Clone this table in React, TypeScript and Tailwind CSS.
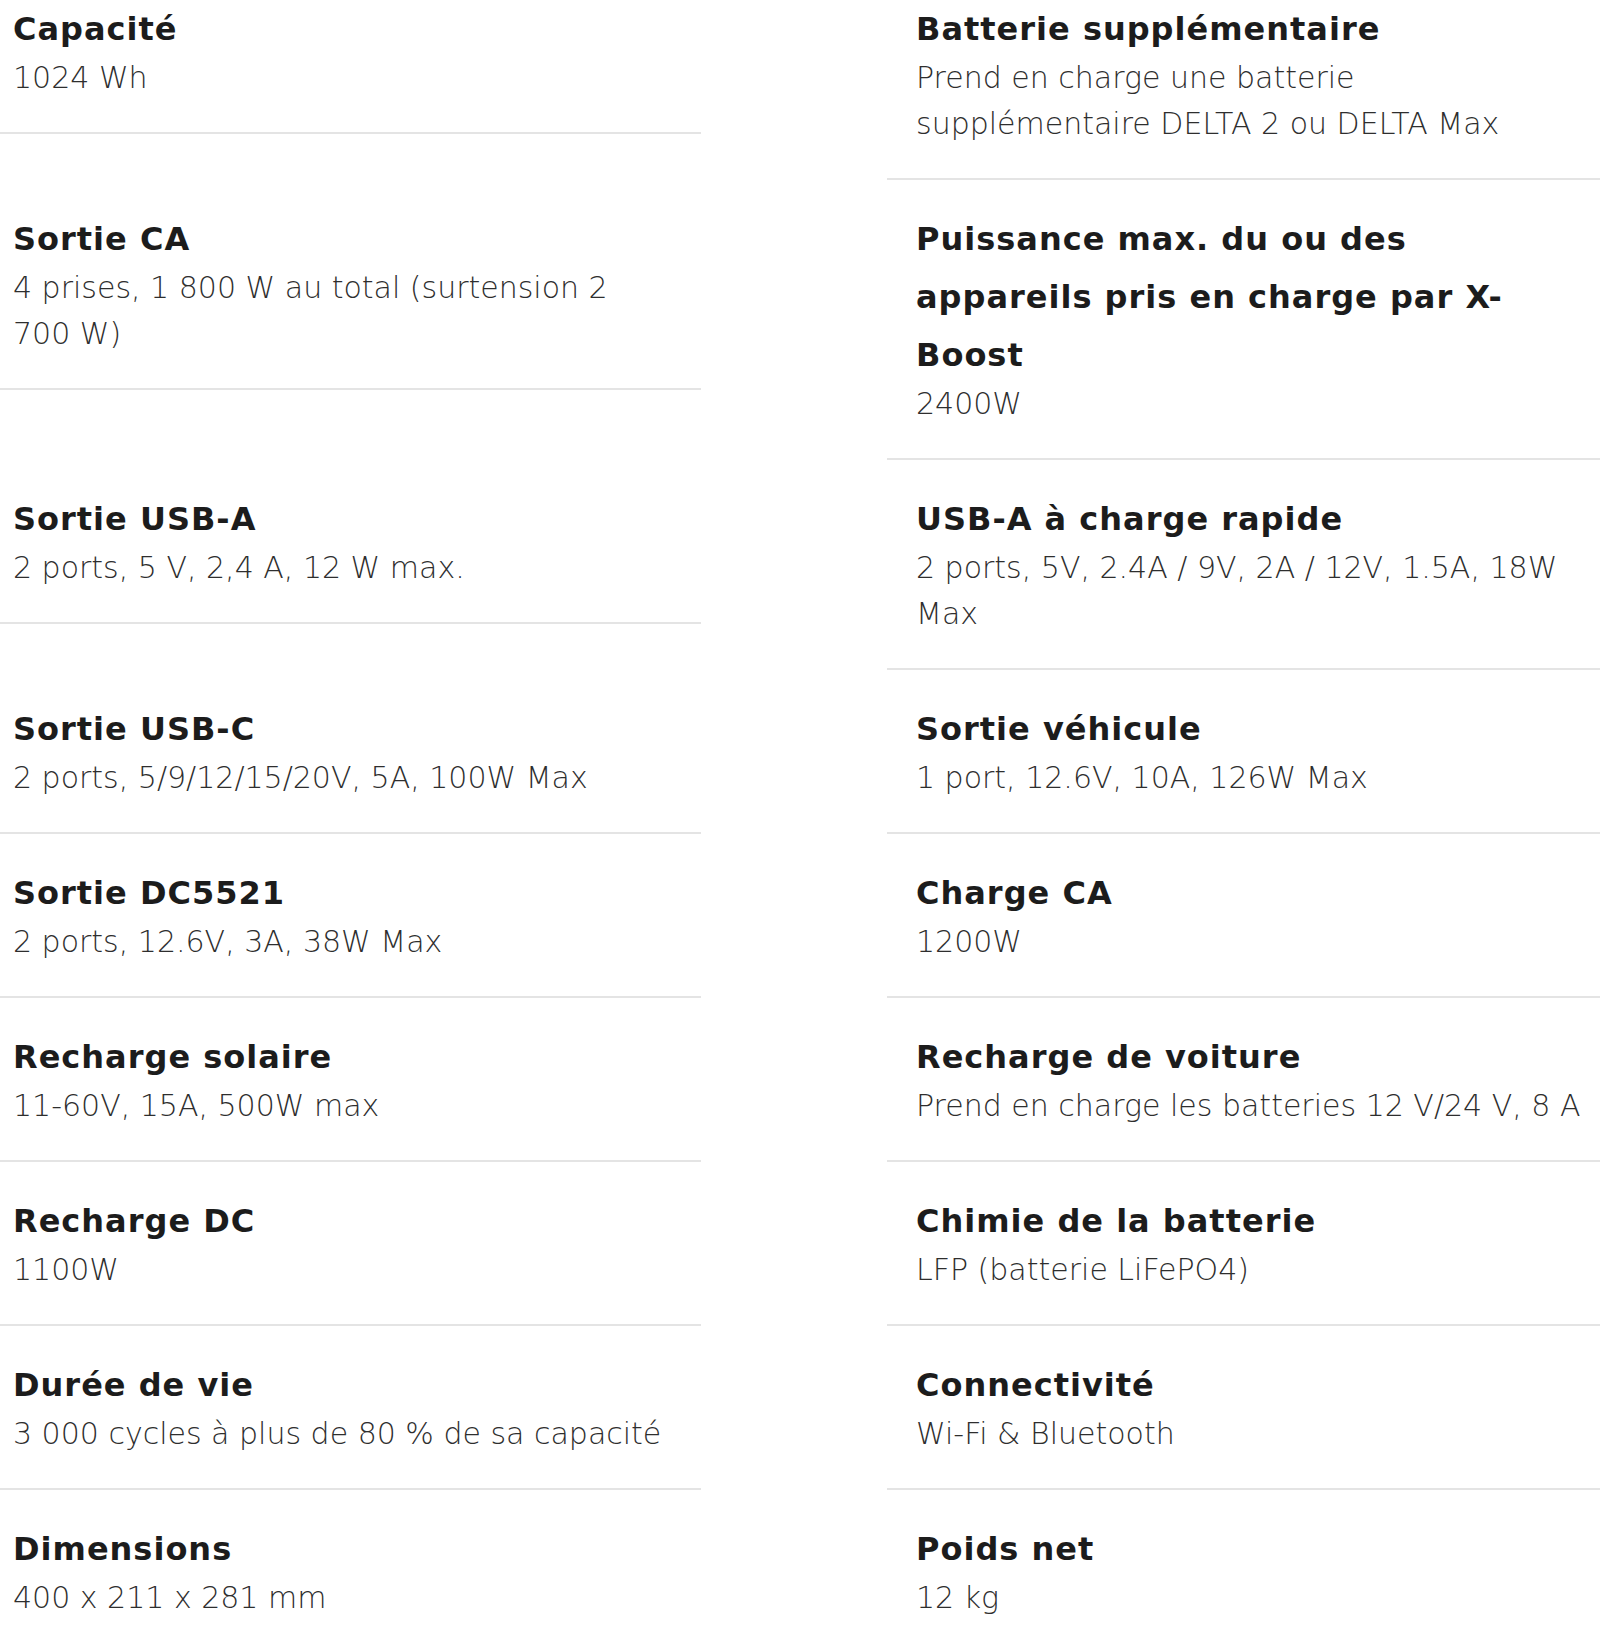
import React from "react";

type Spec = { title: string[]; value: string[] };

const rows: [Spec, Spec][] = [
  [
    { title: ["Capacité"], value: ["1024 Wh"] },
    {
      title: ["Batterie supplémentaire"],
      value: ["Prend en charge une batterie", "supplémentaire DELTA 2 ou DELTA Max"],
    },
  ],
  [
    { title: ["Sortie CA"], value: ["4 prises, 1 800 W au total (surtension 2", "700 W)"] },
    {
      title: ["Puissance max. du ou des", "appareils pris en charge par X-", "Boost"],
      value: ["2400W"],
    },
  ],
  [
    { title: ["Sortie USB-A"], value: ["2 ports, 5 V, 2,4 A, 12 W max."] },
    {
      title: ["USB-A à charge rapide"],
      value: ["2 ports, 5V, 2.4A / 9V, 2A / 12V, 1.5A, 18W", "Max"],
    },
  ],
  [
    { title: ["Sortie USB-C"], value: ["2 ports, 5/9/12/15/20V, 5A, 100W Max"] },
    { title: ["Sortie véhicule"], value: ["1 port, 12.6V, 10A, 126W Max"] },
  ],
  [
    { title: ["Sortie DC5521"], value: ["2 ports, 12.6V, 3A, 38W Max"] },
    { title: ["Charge CA"], value: ["1200W"] },
  ],
  [
    { title: ["Recharge solaire"], value: ["11-60V, 15A, 500W max"] },
    { title: ["Recharge de voiture"], value: ["Prend en charge les batteries 12 V/24 V, 8 A"] },
  ],
  [
    { title: ["Recharge DC"], value: ["1100W"] },
    { title: ["Chimie de la batterie"], value: ["LFP (batterie LiFePO4)"] },
  ],
  [
    { title: ["Durée de vie"], value: ["3 000 cycles à plus de 80 % de sa capacité"] },
    { title: ["Connectivité"], value: ["Wi-Fi & Bluetooth"] },
  ],
  [
    { title: ["Dimensions"], value: ["400 x 211 x 281 mm"] },
    { title: ["Poids net"], value: ["12 kg"] },
  ],
];

function Item({ spec, right }: { spec: Spec; right?: boolean }) {
  return (
    <div
      className={
        "border-b-2 border-[#e4e4e4] pb-[31px] " + (right ? "pl-[29px]" : "pl-[13px]")
      }
    >
      <h3 className="font-['DejaVu_Sans',sans-serif] text-[32px] leading-[58px] font-bold tracking-[1px] text-[#1c1c1c]">
        {spec.title.map((t, i) => (
          <span key={i} className="block whitespace-nowrap">
            {t}
          </span>
        ))}
      </h3>
      <p className="-mt-[3px] font-['DejaVu_Sans',sans-serif] text-[30px] leading-[46px] font-extralight text-[#2e2e2e]">
        {spec.value.map((t, i) => (
          <span key={i} className="block whitespace-nowrap">
            {t}
          </span>
        ))}
      </p>
    </div>
  );
}

export default function App() {
  return (
    <div className="min-h-screen w-[1600px] bg-white">
      <div className="grid grid-cols-[701px_713px] gap-x-[186px] gap-y-[30px] items-start">
        {rows.map(([l, r], i) => (
          <React.Fragment key={i}>
            <Item spec={l} />
            <Item spec={r} right />
          </React.Fragment>
        ))}
      </div>
    </div>
  );
}
